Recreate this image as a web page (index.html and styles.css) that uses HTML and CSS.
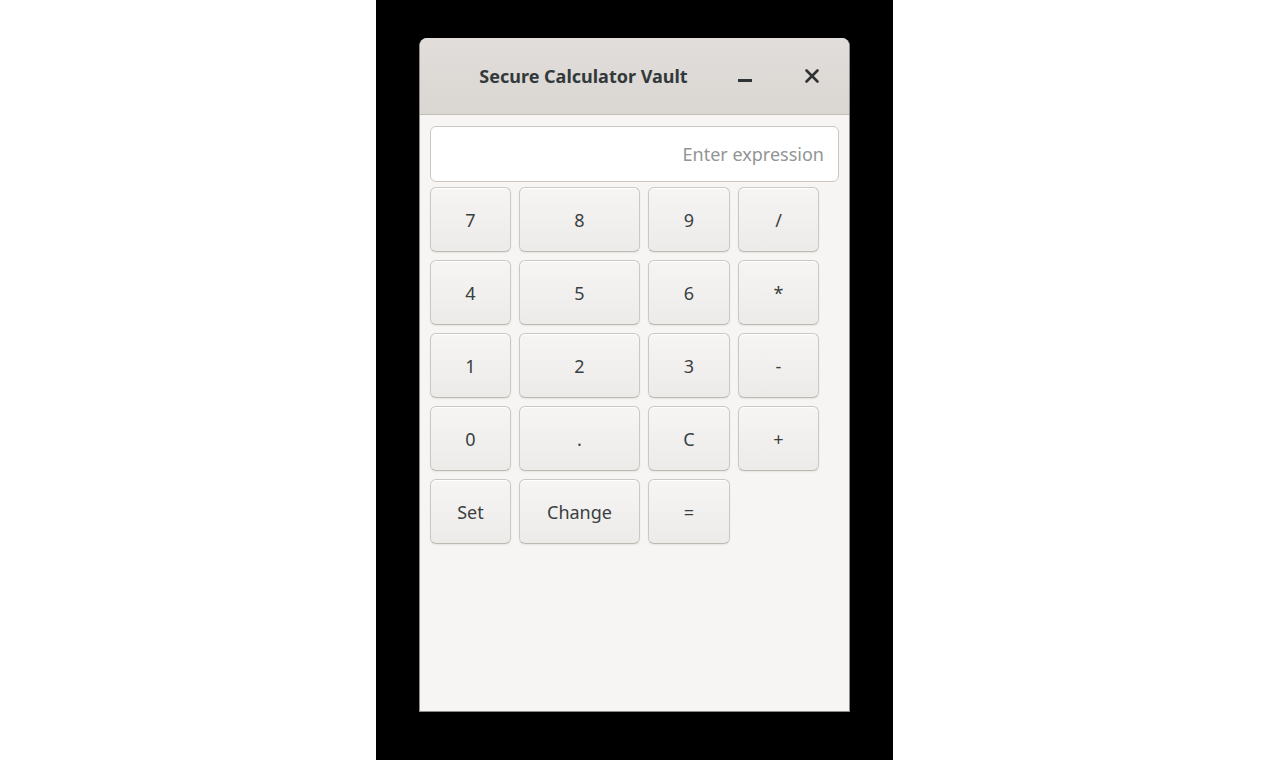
FILE: index.html
```html
<!DOCTYPE html>
<html lang="en">
<head>
    <meta charset="UTF-8">
    <title>Secure Calculator Vault</title>
    <link rel="stylesheet" href="styles.css">
</head>
<body>
    <div class="screen">
        <div class="window">
            <div class="headerbar">
                <div class="title">Secure Calculator Vault</div>
                <div class="controls">
                    <div class="ctl">
                        <svg width="16" height="16" viewBox="0 0 16 16"><rect x="1" y="11" width="14" height="3" fill="#2e3436"/></svg>
                    </div>
                    <div class="ctl">
                        <svg width="16" height="16" viewBox="0 0 16 16"><path d="M2.5 2.5 L13.5 13.5 M13.5 2.5 L2.5 13.5" stroke="#2e3436" stroke-width="2.6" stroke-linecap="round"/></svg>
                    </div>
                </div>
            </div>
            <div class="content">
                <input class="entry" type="text" placeholder="Enter expression">
                <div class="keys">
                    <button>7</button>
                    <button>8</button>
                    <button>9</button>
                    <button>/</button>
                    <button>4</button>
                    <button>5</button>
                    <button>6</button>
                    <button>*</button>
                    <button>1</button>
                    <button>2</button>
                    <button>3</button>
                    <button>-</button>
                    <button>0</button>
                    <button>.</button>
                    <button>C</button>
                    <button>+</button>
                    <button>Set</button>
                    <button>Change</button>
                    <button>=</button>
                </div>
            </div>
        </div>
    </div>
</body>
</html>
```

FILE: styles.css
```css
body {
    margin: 0;
    background: #ffffff;
    display: flex;
    justify-content: center;
    font-family: 'Noto Sans', 'Open Sans', sans-serif;
    color: #2e3436;
}
.screen {
    width: 517px;
    height: 760px;
    margin-left: -1px;
    background: #000;
    box-sizing: border-box;
    padding-top: 38px;
    display: flex;
    justify-content: center;
    align-items: flex-start;
}
.window {
    width: 431px;
    height: 674px;
    box-sizing: border-box;
    background: #f6f5f4;
    border: 1px solid #8e8a86;
    border-top: none;
    border-radius: 8px 8px 0 0;
    display: flex;
    flex-direction: column;
}
.headerbar {
    height: 77px;
    box-sizing: border-box;
    background: linear-gradient(#e1dedb, #dad6d2);
    border-bottom: 1px solid #c2bcb6;
    border-radius: 8px 8px 0 0;
    display: flex;
    align-items: center;
    padding: 0 19px 0 20px;
}
.title {
    flex: 1;
    text-align: center;
    font-weight: bold;
    font-size: 18px;
    color: #33393b;
}
.controls {
    display: flex;
    gap: 31px;
}
.ctl {
    width: 36px;
    height: 36px;
    display: flex;
    align-items: center;
    justify-content: center;
}
.content {
    padding: 11px 10px;
}
.entry {
    display: block;
    width: 100%;
    height: 56px;
    box-sizing: border-box;
    margin: 0 0 5px;
    border: 1px solid #cdc7c2;
    border-radius: 6px;
    background: #fff;
    padding: 0 14px;
    text-align: right;
    font-family: 'Noto Sans', 'Open Sans', sans-serif;
    font-size: 18px;
    color: #2e3436;
    outline: none;
}
.entry::placeholder {
    color: #929595;
}
.keys {
    display: grid;
    grid-template-columns: 81px 121px 82px 81px;
    grid-auto-rows: 65px;
    gap: 8px;
}
.keys button {
    margin: 0;
    border: 1px solid #cdc7c2;
    border-bottom-color: #bfb8b1;
    border-radius: 6px;
    background: linear-gradient(#f6f5f4, #edebe9);
    box-shadow: inset 0 1px #fff, 0 1px 2px rgba(0, 0, 0, 0.07);
    font-family: 'Noto Sans', 'Open Sans', sans-serif;
    font-size: 18px;
    color: #3a3f41;
    padding: 0;
}
```
